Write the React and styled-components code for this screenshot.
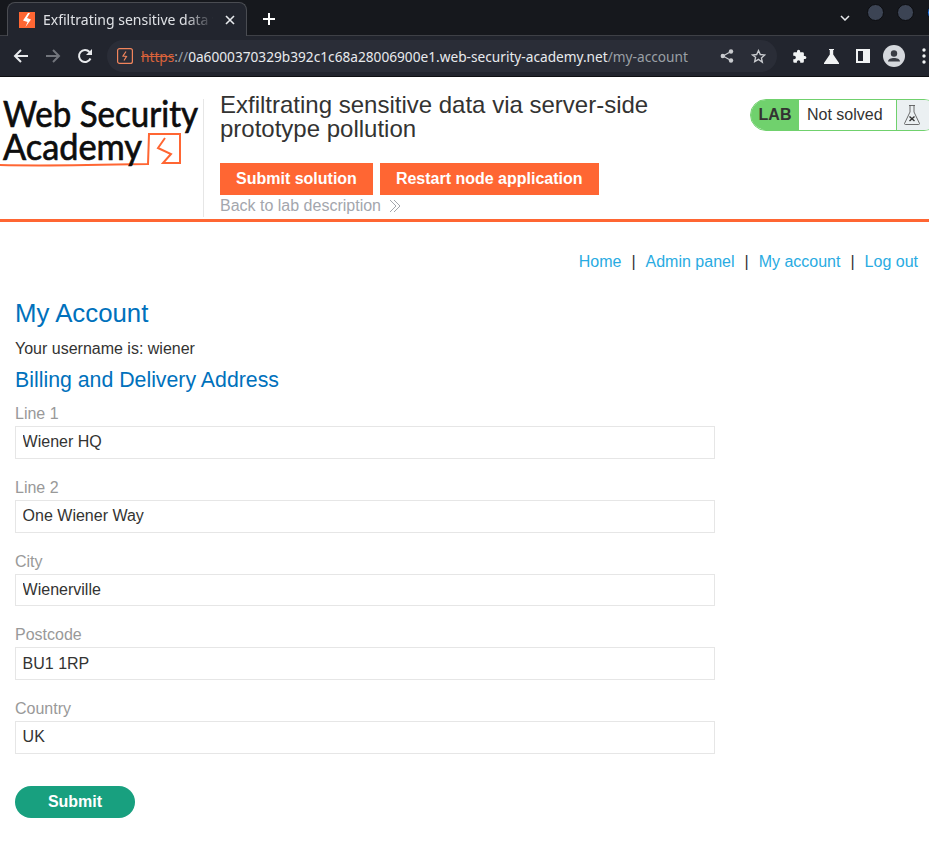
import React from 'react';
import styled, { createGlobalStyle } from 'styled-components';

const Global = createGlobalStyle`
  html, body { margin: 0; padding: 0; background: #fff; }
  body { font-family: "Liberation Sans", Arial, sans-serif; overflow: hidden; }
  * { box-sizing: border-box; }
`;

const TabStrip = styled.div`
  height: 36px;
  background: #16181d;
  display: flex;
  align-items: flex-end;
  padding-left: 7px;
  border-bottom: 1px solid #3e4046;
`;
const Tab = styled.div`
  width: 240px;
  height: 34px;
  margin-bottom: -1px;
  background: #22252e;
  border: 1px solid #4a4c52;
  border-bottom: 0;
  border-radius: 8px 8px 0 0;
  display: flex;
  align-items: center;
  padding: 0 11px 0 11px;
  gap: 8px;
`;
const TabTitle = styled.span`
  flex: 1;
  font: 14px "Noto Sans", sans-serif;
  color: #dfe1e5;
  white-space: nowrap;
  overflow: hidden;
  -webkit-mask-image: linear-gradient(90deg, #000 82%, transparent 98%);
  mask-image: linear-gradient(90deg, #000 82%, transparent 98%);
`;
const NewTab = styled.div`
  margin: 0 0 10px 16px;
  display: flex;
`;
const WindowControls = styled.div`
  margin-left: auto;
  margin-right: -15px;
  margin-bottom: 14px;
  display: flex;
  align-items: center;
  gap: 13px;
`;
const Chevron = styled.svg`
  margin: 11px 4px 0 0;
`;
const WindowDot = styled.span`
  width: 17px;
  height: 17px;
  border-radius: 50%;
  background: ${p => p.$color};
  border: 1px solid #0c0d10;
`;
const Toolbar = styled.div`
  height: 41px;
  background: #22252e;
  border-bottom: 1px solid #0e0f12;
  display: flex;
  align-items: center;
  padding-left: 13px;
`;
const NavIcons = styled.div`
  display: flex;
  align-items: center;
  gap: 16px;
  margin-right: 14px;
`;
const UrlBar = styled.div`
  width: 670px;
  height: 32px;
  border-radius: 16px;
  background: #2a2d37;
  display: flex;
  align-items: center;
  padding-left: 10px;
  font-family: "Noto Sans", sans-serif;
  white-space: nowrap;
  flex-shrink: 0;
`;
const UrlText = styled.span`
  font-size: 13.68px;
  color: ${p => p.$color || '#e8eaed'};
  text-decoration: ${p => (p.$strike ? 'line-through' : 'none')};
  margin-left: ${p => (p.$first ? '8px' : '0')};
`;
const UrlActions = styled.div`
  margin-left: auto;
  margin-right: 11px;
  display: flex;
  align-items: center;
  gap: 17px;
`;
const ExtIcons = styled.div`
  display: flex;
  align-items: center;
  gap: 17px;
  margin-left: 15px;
  flex-shrink: 0;
`;
const Avatar = styled.svg`
  margin-left: -4px;
`;

const LabHeader = styled.header`
  height: 145px;
  border-bottom: 3px solid #ff6633;
  display: flex;
  background: #fff;
  padding-top: 20px;
  position: relative;
`;
const LogoCell = styled.div`
  width: 204px;
  height: 118px;
  margin-top: 2px;
  border-right: 1px solid #e6e6e6;
  flex-shrink: 0;
`;
const TitleCell = styled.div`
  padding-left: 16px;
  flex: 1;
`;
const LabTitle = styled.h2`
  margin: -4px 0 0;
  font-size: 24px;
  line-height: 24px;
  font-weight: 400;
  color: #333332;
  width: 470px;
`;
const ActionRow = styled.div`
  display: flex;
  gap: 7px;
  margin-top: 22px;
`;
const OrangeButton = styled.a`
  height: 32px;
  background: #ff6633;
  color: #fff;
  font-weight: 700;
  font-size: 16px;
  line-height: 31px;
  padding: 0 16px;
`;
const BackLink = styled.a`
  display: flex;
  align-items: center;
  gap: 8px;
  color: #a3a6ad;
  font-size: 16px;
  line-height: 21px;
`;
const Status = styled.div`
  position: absolute;
  top: 22px;
  left: 750px;
  width: 190px;
  height: 32px;
  border: 1px solid #70d16d;
  border-radius: 16px;
  display: flex;
  overflow: hidden;
  background: #fff;
`;
const StatusLabel = styled.span`
  width: 48px;
  background: #70d16d;
  color: #333332;
  font-weight: 700;
  font-size: 16px;
  line-height: 30px;
  text-align: center;
`;
const StatusText = styled.span`
  width: 98px;
  font-size: 16px;
  line-height: 29px;
  color: #333332;
  padding-left: 8px;
  border-right: 1px solid #70d16d;
`;
const StatusFlask = styled.span`
  flex: 1;
  background: #ebf0f2;
  padding: 4px 0 0 6px;
`;

const Main = styled.main`
  padding: 0 11px 0 15px;
`;
const TopLinks = styled.nav`
  display: flex;
  justify-content: flex-end;
  align-items: center;
  height: 20px;
  margin-top: 30px;
  font-size: 16px;
`;
const TopLink = styled.a`
  color: #29abe2;
`;
const Pipe = styled.span`
  color: #333332;
  margin: 0 10px;
`;
const PageTitle = styled.h1`
  margin: 24px 0 0;
  font-size: 25.8px;
  line-height: 34px;
  font-weight: 400;
  color: #0071bc;
`;
const Username = styled.p`
  margin: 9px 0 0;
  font-size: 16px;
  line-height: 20px;
  color: #333332;
`;
const SectionTitle = styled.h2`
  margin: 8px 0 0;
  font-size: 21.3px;
  line-height: 26px;
  font-weight: 400;
  color: #0071bc;
`;
const AddressForm = styled.form`
  margin-top: 11px;
  width: 700px;
  display: flex;
  flex-direction: column;
`;
const Field = styled.label`
  display: block;
  margin-bottom: 19px;
  &:last-of-type {
    margin-bottom: 0;
  }
`;
const FieldName = styled.span`
  display: block;
  font-size: 16px;
  line-height: 20px;
  color: #999;
  margin-bottom: 2px;
`;
const FieldInput = styled.input`
  display: block;
  width: 100%;
  height: 32.75px;
  border: 1px solid #e6e6e6;
  padding: 0 6.6px;
  font: 16px "Liberation Sans", sans-serif;
  color: #333332;
  background: #fff;
  outline: 0;
`;
const SubmitButton = styled.button`
  width: 120px;
  height: 32px;
  margin-top: 32px;
  border: 0;
  border-radius: 16px;
  background: #18a07f;
  color: #fff;
  font: 700 16px "Liberation Sans", sans-serif;
`;

const LogoText = styled.text`
  font-family: "Lato", "Noto Sans", sans-serif;
  font-size: 37px;
  fill: #0d0d0d;
  stroke: #0d0d0d;
  stroke-width: 0.7px;
`;
const LogoSvg = styled.svg`
  display: block;
  margin-top: -6px;
`;

const Bolt = () => (
  <svg width="16" height="16" viewBox="0 0 16 16">
    <rect width="16" height="16" fill="#ff6633" />
    <path d="M9 1 4 8.500l4.500 1.500L6.500 15 12 7.500 8 6l3-5z" fill="#fff" />
  </svg>
);

const Logo = () => (
  <LogoSvg width="203" height="80" viewBox="0 0 203 80">
    <path
      d="M0 72c40 1 100 0 148-1l1-30 31 0 0 29-17 0 8-9-13-6 7-10"
      fill="none"
      stroke="#ff6633"
      strokeWidth="2"
    />
    <LogoText x="3" y="33.700" textLength="195" lengthAdjust="spacingAndGlyphs">Web Security</LogoText>
    <LogoText x="3" y="67" textLength="139" lengthAdjust="spacingAndGlyphs">Academy</LogoText>
  </LogoSvg>
);

const fields = [
  { label: 'Line 1', value: 'Wiener HQ' },
  { label: 'Line 2', value: 'One Wiener Way' },
  { label: 'City', value: 'Wienerville' },
  { label: 'Postcode', value: 'BU1 1RP' },
  { label: 'Country', value: 'UK' },
];

export default function App() {
  return (
    <>
      <Global />
      <TabStrip>
        <Tab>
          <Bolt />
          <TabTitle>Exfiltrating sensitive data via</TabTitle>
          <svg width="10" height="10" viewBox="0 0 10 10" stroke="#e8eaed" strokeWidth="1.6">
            <path d="M1 1l8 8M9 1l-8 8" />
          </svg>
        </Tab>
        <NewTab>
          <svg width="12" height="12" viewBox="0 0 12 12" stroke="#fff" strokeWidth="2">
            <path d="M6 0v12M0 6h12" />
          </svg>
        </NewTab>
        <WindowControls>
          <Chevron width="10" height="6" viewBox="0 0 10 6" fill="none" stroke="#e8eaed" strokeWidth="1.5">
            <path d="M1 1l4 4 4-4" />
          </Chevron>
          <WindowDot $color="#3c4454" />
          <WindowDot $color="#3c4454" />
          <WindowDot $color="#1a73e8" />
        </WindowControls>
      </TabStrip>
      <Toolbar>
        <NavIcons>
          <svg width="16" height="14" viewBox="0 0 16 14" fill="none" stroke="#e8eaed" strokeWidth="2">
            <path d="M15 7H2M8 1 2 7l6 6" />
          </svg>
          <svg width="16" height="14" viewBox="0 0 16 14" fill="none" stroke="#72757c" strokeWidth="2">
            <path d="M1 7h13M8 1l6 6-6 6" />
          </svg>
          <svg width="16" height="16" viewBox="0 0 16 16" fill="none" stroke="#e8eaed" strokeWidth="2">
            <path d="M13.500 10.500A6 6 0 1 1 12.500 4" />
            <path d="M15 1v6H9z" fill="#e8eaed" stroke="none" />
          </svg>
        </NavIcons>
        <UrlBar>
          <svg width="16" height="16" viewBox="0 0 16 16" fill="none" stroke="#f2855c" strokeWidth="1.2">
            <rect x=".6" y=".6" width="14.800" height="14.800" rx="2" />
            <path d="M9 3.500 6 8l3.500.5L7 12.500" />
          </svg>
          <UrlText $first $strike $color="#d9623a">https</UrlText>
          <UrlText $color="#9aa0a6">://</UrlText>
          <UrlText>0a6000370329b392c1c68a28006900e1.web-security-academy.net</UrlText>
          <UrlText $color="#9aa0a6">/my-account</UrlText>
          <UrlActions>
            <svg width="14" height="14" viewBox="0 0 14 14" fill="#c9cbcf">
              <circle cx="11" cy="2.500" r="2.200" />
              <circle cx="2.800" cy="7" r="2.200" />
              <circle cx="11" cy="11.500" r="2.200" />
              <path d="M3 7l8-4.500M3 7l8 4.500" stroke="#c9cbcf" strokeWidth="1.200" />
            </svg>
            <svg width="15" height="15" viewBox="0 0 24 24" fill="none" stroke="#c9cbcf" strokeWidth="2.200">
              <path d="m12 2.500 2.900 6.300 6.900.8-5.100 4.700 1.400 6.800L12 16.700l-6.100 3.400 1.400-6.800L2.200 9.600l6.900-.8z" />
            </svg>
          </UrlActions>
        </UrlBar>
        <ExtIcons>
          <svg width="15" height="15" viewBox="0 0 24 24" fill="#f1f3f4">
            <path d="M20.500 11H19V7a2 2 0 0 0-2-2h-4V3.500a2.500 2.500 0 0 0-5 0V5H4a2 2 0 0 0-2 2v3.800h1.500a2.700 2.700 0 0 1 0 5.400H2V20a2 2 0 0 0 2 2h3.800v-1.500a2.700 2.700 0 0 1 5.400 0V22H17a2 2 0 0 0 2-2v-4h1.500a2.500 2.500 0 0 0 0-5z" />
          </svg>
          <svg width="15" height="15" viewBox="0 0 15 15" fill="#f1f3f4">
            <path d="M5 0h5v1H9.200v4.500L15 14v1H0v-1l5.800-8.500V1H5z" />
          </svg>
          <svg width="14" height="14" viewBox="0 0 14 14" fill="none" stroke="#f1f3f4" strokeWidth="2">
            <rect x="1" y="1" width="12" height="12" />
            <path d="M10 1v12" strokeWidth="6" />
          </svg>
          <Avatar width="22" height="22" viewBox="0 0 22 22">
            <circle cx="11" cy="11" r="11" fill="#d5d8dd" />
            <circle cx="11" cy="8.500" r="3.200" fill="#3a3d45" />
            <path d="M5 16.500c0-2.600 3.200-3.600 6-3.600s6 1 6 3.600z" fill="#3a3d45" />
          </Avatar>
          <svg width="4" height="16" viewBox="0 0 4 16" fill="#f1f3f4">
            <circle cx="2" cy="2" r="1.700" />
            <circle cx="2" cy="8" r="1.700" />
            <circle cx="2" cy="14" r="1.700" />
          </svg>
        </ExtIcons>
      </Toolbar>
      <LabHeader>
        <LogoCell>
          <Logo />
        </LogoCell>
        <TitleCell>
          <LabTitle>Exfiltrating sensitive data via server-side prototype pollution</LabTitle>
          <ActionRow>
            <OrangeButton>Submit solution</OrangeButton>
            <OrangeButton>Restart node application</OrangeButton>
          </ActionRow>
          <BackLink>
            Back to lab description
            <svg width="12" height="14" viewBox="0 0 12 14" fill="none" stroke="#a3a6ad">
              <path d="M1 1l6 6-6 6M5 1l6 6-6 6" />
            </svg>
          </BackLink>
        </TitleCell>
        <Status>
          <StatusLabel>LAB</StatusLabel>
          <StatusText>Not solved</StatusText>
          <StatusFlask>
            <svg width="18" height="22" viewBox="0 0 18 22" fill="none" stroke="#4a4a4a" strokeWidth="0.8">
              <path d="M6 1.500h6M7 1.500v6.500L1.500 19.500a1 1 0 0 0 1 1h13a1 1 0 0 0 1-1L11 8V1.500" />
              <path d="M6.500 12.500l5 4.500M11.500 12.500l-5 4.500" stroke="#333332" strokeWidth="1.400" />
            </svg>
          </StatusFlask>
        </Status>
      </LabHeader>
      <Main>
        <TopLinks>
          <TopLink>Home</TopLink>
          <Pipe>|</Pipe>
          <TopLink>Admin panel</TopLink>
          <Pipe>|</Pipe>
          <TopLink>My account</TopLink>
          <Pipe>|</Pipe>
          <TopLink>Log out</TopLink>
        </TopLinks>
        <PageTitle>My Account</PageTitle>
        <Username>Your username is: wiener</Username>
        <SectionTitle>Billing and Delivery Address</SectionTitle>
        <AddressForm onSubmit={e => e.preventDefault()}>
          {fields.map(f => (
            <Field key={f.label}>
              <FieldName>{f.label}</FieldName>
              <FieldInput defaultValue={f.value} />
            </Field>
          ))}
          <div>
            <SubmitButton type="submit">Submit</SubmitButton>
          </div>
        </AddressForm>
      </Main>
    </>
  );
}
